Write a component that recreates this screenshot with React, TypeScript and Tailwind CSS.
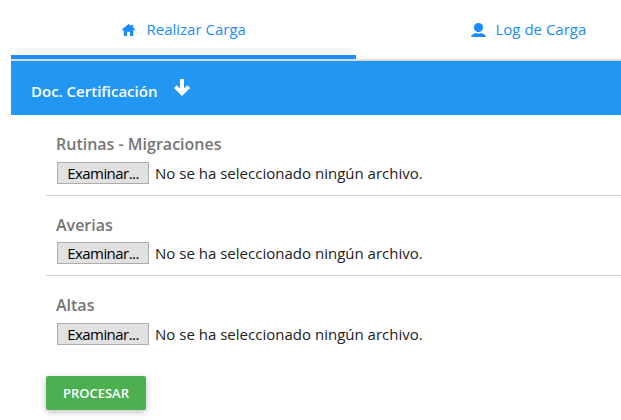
const rows = [
  { label: "Rutinas - Migraciones", section: "h-[81px]", heading: "h-[29px]" },
  { label: "Averias", section: "h-[80px]", heading: "h-[28px]" },
  { label: "Altas", section: "h-[81px]", heading: "h-[29px]" },
];

export default function App() {
  return (
    <div className="h-[420px] w-[621px] overflow-hidden bg-white pl-[11px] font-['Open_Sans',sans-serif] text-[15px]">
      <nav className="flex h-[61px] border-b-2 border-[#dbdbdb] text-[#1a8cff]">
        <div className="flex w-[345px] items-center border-b-4 border-[#1a8cff] pt-1 pl-[111px]">
          <svg className="mr-[11.5px] h-[14px] w-[13px]" viewBox="0 0 13 14" fill="currentColor">
            <path d="M6.5 1 0 6.2v1h1.8V13H5V8.7h3V13h3.2V7.2H13v-1l-1.8-1.5V2H9.2v1.1z" />
          </svg>
          <span>Realizar Carga</span>
        </div>
        <div className="flex flex-1 items-center pl-[115px]">
          <svg className="mr-[9.5px] h-[14px] w-[15px]" viewBox="0 0 15 14" fill="currentColor">
            <circle cx="7.5" cy="4.6" r="4.6" />
            <path d="M0 14c.2-2 2.5-3.4 5-4 1.4.7 3.6.7 5 0 2.5.6 4.8 2 5 4z" />
          </svg>
          <span>Log de Carga</span>
        </div>
      </nav>
      <header className="flex h-[54px] items-center bg-[#2196f3] pl-5 font-semibold text-white">
        <span className="pt-1.5">Doc. Certificación</span>
        <svg className="ml-[16px] h-[18px] w-[18px]" viewBox="0 0 18 18" fill="none" stroke="currentColor" strokeWidth="4">
          <path d="M9 0v14M2.3 7.6 9 14.2l6.7-6.6" />
        </svg>
      </header>
      <main className="pl-[35px]">
        {rows.map(({ label, section, heading }) => (
          <section key={label} className={`${section} border-b border-[#ccc] pt-[18px] pl-[10px] last:border-0`}>
            <h2 className={`${heading} text-base leading-[22px] font-semibold text-[#757575]`}>{label}</h2>
            <div className="flex items-center">
              <button className="ml-px h-[22px] w-[92px] border border-[#adadad] bg-[#e1e1e1] leading-5 tracking-[-0.55px] text-black">Examinar...</button>
              <span className="ml-1.5 leading-[22px] tracking-[0.01px] text-[#212121]">No se ha seleccionado ningún archivo.</span>
            </div>
          </section>
        ))}
      </main>
      <button className="mt-[19px] ml-[35px] h-[34px] w-[100px] rounded-[2px] bg-[#4caf50] pt-0.5 text-[13px] font-semibold text-white shadow-[0_2px_6px_rgba(0,0,0,0.26)]">PROCESAR</button>
    </div>
  );
}
